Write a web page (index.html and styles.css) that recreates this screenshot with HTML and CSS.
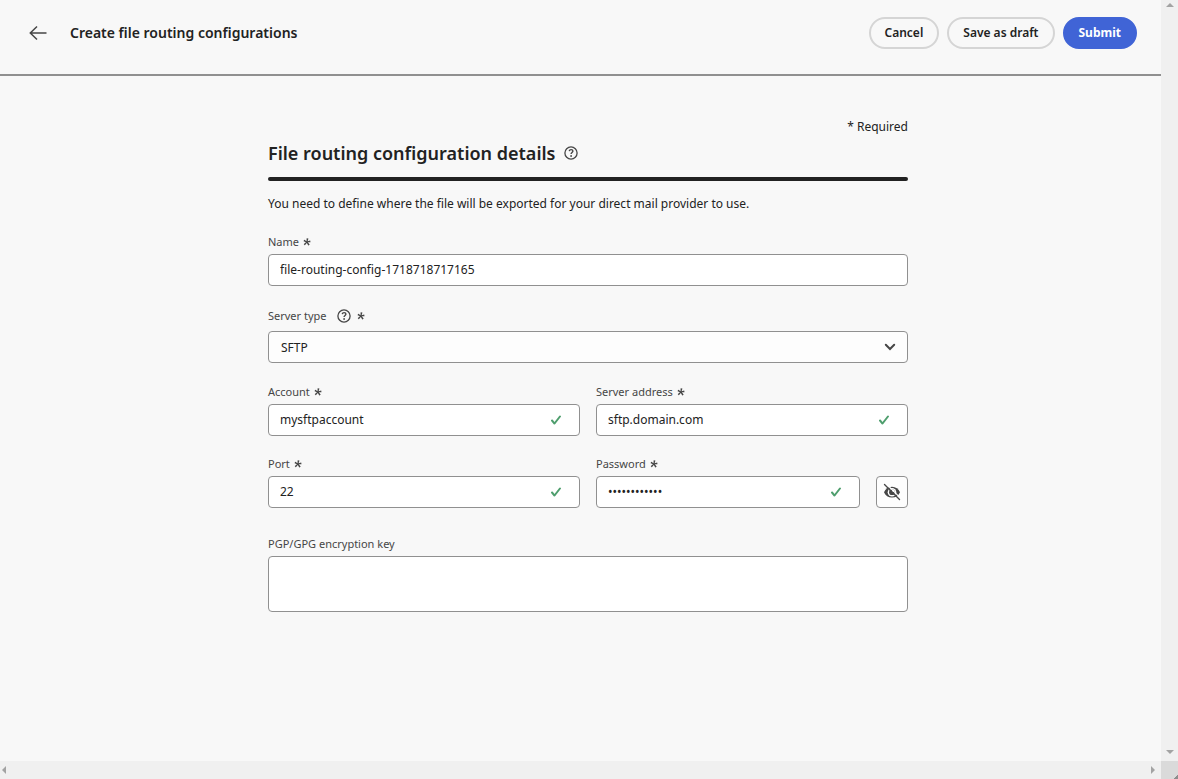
FILE: index.html
```html
<!DOCTYPE html>
<html lang="en">
<head>
<meta charset="utf-8">
<meta name="viewport" content="width=device-width, initial-scale=1">
<title>Create file routing configurations</title>
<link rel="stylesheet" href="styles.css">
</head>
<body>
<svg class="sprite" aria-hidden="true">
  <symbol id="asterisk" viewBox="0 0 8 8"><path d="M6.573 6.558c.056.055.092.13 0 .204l-1.148.74c-.093.056-.13.02-.167-.073L3.832 4.947 1.87 7.18c-.02.036-.093.073-.148 0l-.889-.927c-.093-.055-.074-.111 0-.167l2.111-1.76L.648 3.24c-.037 0-.092-.074-.056-.167l.63-1.259a.097.097 0 0 1 .167-.036L3.5 3.148l.13-2.7a.1.1 0 0 1 .111-.13l1.537.204c.093 0 .111.037.093.13l-.723 2.647 2.445-.741c.055-.037.111-.037.148.074l.241 1.37c.018.093 0 .13-.074.13l-2.556.2z"/></symbol>
  <symbol id="check" viewBox="0 0 10 10"><path d="M3.500 9.500a.999.999 0 0 1-.774-.368l-2.450-3a1 1 0 1 1 1.548-1.264l1.657 2.028 4.680-6.010A1 1 0 0 1 9.740 2.114l-5.450 7a1 1 0 0 1-.777.386z"/></symbol>
  <symbol id="help" viewBox="0 0 14 14"><circle cx="7" cy="7" r="6.1" fill="none" stroke="currentColor" stroke-width="1.3"/><path d="M5.2 5.1c.2-1 1-1.500 1.900-1.500 1 0 1.800.6 1.800 1.500 0 1.300-1.800 1.400-1.800 2.900" fill="none" stroke="currentColor" stroke-width="1.4"/><circle cx="7.1" cy="10" r=".9"/></symbol>
</svg>
<div class="viewport">
  <div class="page">
    <header class="topbar">
      <button class="back" type="button" aria-label="Back"><svg class="icon-back" viewBox="0 0 18 16" aria-hidden="true"><path d="M17.500 8H1.500M8 1.500 1.300 8 8 14.500"/></svg></button>
      <h1 class="title">Create file routing configurations</h1>
      <div class="actions">
        <button class="button" type="button">Cancel</button>
        <button class="button" type="button">Save as draft</button>
        <button class="button button-primary" type="submit" form="routing">Submit</button>
      </div>
    </header>
    <main class="content">
      <form class="form" id="routing">
        <p class="required">* Required</p>
        <h2 class="heading">File routing configuration details <svg class="icon-help" role="img" aria-label="Help"><use href="#help"/></svg></h2>
        <hr class="rule">
        <p class="intro">You need to define where the file will be exported for your direct mail provider to use.</p>
        <div class="fields">
          <div class="field">
            <label class="label" for="name">Name <svg class="icon-required"><use href="#asterisk"/></svg></label>
            <input class="input" id="name" type="text" value="file-routing-config-1718718717165" required>
          </div>
          <div class="field field-select">
            <label class="label" for="type">Server type <svg class="icon-help label-help" role="img" aria-label="Help"><use href="#help"/></svg> <svg class="icon-required"><use href="#asterisk"/></svg></label>
            <div class="control">
              <select class="input select" id="type" required><option>SFTP</option></select>
              <svg class="icon-chevron" viewBox="0 0 12 8" aria-hidden="true"><path d="M1.800 1.800 6 6l4.200-4.200"/></svg>
            </div>
          </div>
          <div class="row">
            <div class="field">
              <label class="label" for="account">Account <svg class="icon-required"><use href="#asterisk"/></svg></label>
              <div class="control">
                <input class="input" id="account" type="text" value="mysftpaccount" required>
                <svg class="icon-check" role="img" aria-label="Valid"><use href="#check"/></svg>
              </div>
            </div>
            <div class="field">
              <label class="label" for="address">Server address <svg class="icon-required"><use href="#asterisk"/></svg></label>
              <div class="control">
                <input class="input" id="address" type="text" value="sftp.domain.com" required>
                <svg class="icon-check" role="img" aria-label="Valid"><use href="#check"/></svg>
              </div>
            </div>
          </div>
          <div class="row">
            <div class="field">
              <label class="label" for="port">Port <svg class="icon-required"><use href="#asterisk"/></svg></label>
              <div class="control">
                <input class="input" id="port" type="text" value="22" required>
                <svg class="icon-check" role="img" aria-label="Valid"><use href="#check"/></svg>
              </div>
            </div>
            <div class="secret">
              <div class="field">
                <label class="label" for="password">Password <svg class="icon-required"><use href="#asterisk"/></svg></label>
                <div class="control">
                  <input class="input" id="password" type="password" value="abcdefghijkl" required>
                  <svg class="icon-check" role="img" aria-label="Valid"><use href="#check"/></svg>
                </div>
              </div>
              <button class="reveal" type="button" aria-label="Show password"><svg class="icon-eye" viewBox="0 0 18 18" aria-hidden="true"><path d="M1 9.200C2.400 6 5.300 3.800 9 3.800s6.600 2.200 8 5.400c-1.400 3.200-4.300 5.400-8 5.400S2.400 12.400 1 9.200Z"/><circle class="eye-white" cx="9" cy="9.200" r="4.300"/><circle cx="9" cy="9.200" r="2.900"/><circle class="eye-white" cx="10.300" cy="7.800" r="1.300"/><path class="eye-gap" d="M3 .6 17.800 15.400"/><path class="eye-slash" d="M1.500 1.500 16.500 16.500"/></svg></button>
            </div>
          </div>
          <div class="field field-key">
            <label class="label" for="key">PGP/GPG encryption key</label>
            <textarea class="input textarea" id="key"></textarea>
          </div>
        </div>
      </form>
    </main>
  </div>
  <div class="scroll scroll-y" aria-hidden="true">
    <svg class="icon-scroll" viewBox="0 0 8 8"><path d="M4 2 8 6H0z"/></svg>
    <svg class="icon-scroll" viewBox="0 0 8 8"><path d="M4 6 0 2h8z"/></svg>
  </div>
  <div class="scroll" aria-hidden="true">
    <svg class="icon-scroll" viewBox="0 0 8 8"><path d="M2 4 6 0v8z"/></svg>
    <svg class="icon-scroll" viewBox="0 0 8 8"><path d="M6 4 2 8V0z"/></svg>
  </div>
  <div class="corner" aria-hidden="true"></div>
</div>
</body>
</html>
```
FILE: styles.css
```css
* { box-sizing: border-box; }

body {
  margin: 0;
  background: #f8f8f8;
  color: #222;
  font: 12px/20px "Noto Sans", "Open Sans", sans-serif;
}

button, input, select, textarea { font: inherit; color: inherit; margin: 0; }
svg { fill: currentColor; flex: none; }
.sprite { display: none; }

.viewport {
  display: grid;
  grid-template: 1fr 18px / 1fr 17px;
  min-height: 100vh;
}

.topbar {
  display: flex;
  align-items: center;
  padding: 17px 24px 25px 28px;
  border-bottom: 2px solid #909090;
}

.back {
  display: flex;
  padding: 0;
  border: 0;
  background: none;
  color: #464646;
}
.icon-back { width: 20px; height: 16px; fill: none; stroke: currentColor; stroke-width: 1.5; }

.title { flex: 1; margin: 0 0 0 22px; font-size: 14px; font-weight: 600; }

.actions { display: flex; gap: 8px; }
.button {
  height: 32px;
  padding: 0 14px;
  border: 2px solid #d5d5d5;
  border-radius: 16px;
  background: #f8f8f8;
  font-weight: 600;
  line-height: 16px;
}
.button-primary { border-color: #4064d6; background: #4064d6; color: #fff; font-weight: 700; }

.content { padding: 41px 0 40px 15px; }
.form { max-width: 640px; margin: 0 auto; }

.required { margin: 0; text-align: right; }
.heading {
  display: flex;
  align-items: center;
  gap: 9px;
  margin: 0;
  font-size: 18px;
  font-weight: 600;
  line-height: 32px;
}
.icon-help { width: 14px; height: 14px; color: #464646; }
.rule { height: 4px; margin: 8px 0 13px; border: 0; border-radius: 2px; background: #222; }
.intro { margin: 0 0 20px; }

.fields { display: flex; flex-direction: column; gap: 20px; }
.field { display: flex; flex: 1; flex-direction: column; gap: 4px; min-width: 0; }
.field-select { gap: 7px; padding: 2px 0 1px; }
.field-key { padding-top: 8px; }
.row { display: grid; grid-template-columns: 1fr 1fr; gap: 16px; }
.secret { display: flex; align-items: flex-end; gap: 16px; }

.label {
  display: flex;
  align-items: center;
  gap: 4px;
  color: #464646;
  font-size: 11px;
  line-height: 16px;
}
.label-help { margin: 0 2px 0 6px; }
.icon-required { width: 8px; height: 8px; }

.input {
  display: block;
  width: 100%;
  height: 32px;
  padding: 0 11px 2px;
  border: 1px solid #909090;
  border-radius: 4px;
  background: #fff;
}
.select { appearance: none; padding: 1px 12px 0; background: #fdfdfd; }
.textarea { height: 56px; resize: none; }

.control { display: grid; align-items: center; }
.control > * { grid-area: 1 / 1; }
.icon-check { width: 10px; height: 10px; margin-right: 19px; justify-self: end; color: #4e9e6d; }
.icon-chevron {
  width: 12px;
  height: 8px;
  margin-right: 12px;
  justify-self: end;
  fill: none;
  stroke: #464646;
  stroke-width: 2;
  stroke-linecap: round;
  pointer-events: none;
}

.reveal {
  display: flex;
  align-items: center;
  justify-content: center;
  width: 32px;
  height: 32px;
  padding: 0;
  border: 1px solid #909090;
  border-radius: 4px;
  background: #fdfdfd;
  color: #464646;
}
.icon-eye { width: 18px; height: 18px; }
.eye-white { fill: #fdfdfd; }
.eye-gap { stroke: #fdfdfd; stroke-width: 1.2; }
.eye-slash { stroke: currentColor; stroke-width: 1.4; stroke-linecap: round; }

.scroll {
  display: flex;
  align-items: center;
  justify-content: space-between;
  background: #f0f0f0;
  color: #a3a3a3;
  padding: 0 4px 0 0;
}
.scroll-y { flex-direction: column; padding: 1px 0 5px; }
.icon-scroll { width: 8px; height: 8px; }
.corner { background: linear-gradient(135deg, #dadada 86%, #8d8d8d 87%); }
```
